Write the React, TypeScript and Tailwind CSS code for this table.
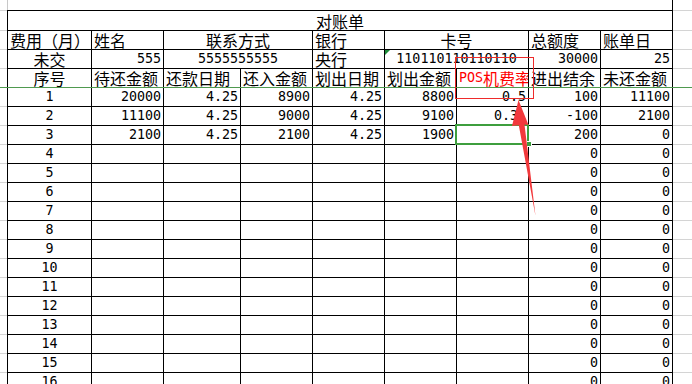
import React from 'react';
import clsx from 'clsx';

const cols = 'grid-cols-[84px_72px_77px_72px_72px_72px_72px_72px_72px]';

const rows: string[][] = [
  ['1', '20000', '4.25', '8900', '4.25', '8800', '0.5', '100', '11100'],
  ['2', '11100', '4.25', '9000', '4.25', '9100', '0.3', '-100', '2100'],
  ['3', '2100', '4.25', '2100', '4.25', '1900', '', '200', '0'],
  ...Array.from({ length: 13 }, (_, i) => [String(i + 4), '', '', '', '', '', '', '0', '0']),
];

// ascii runs get the narrow mono face, CJK keeps the sans face
const Txt: React.FC<{ s: string }> = ({ s }) => (
  <>
    {(s.match(/[\x00-\x7f]+|[^\x00-\x7f]+/g) || []).map((part, i) =>
      /^[\x00-\x7f]+$/.test(part) ? (
        <span key={i} className="font-['DejaVu_Sans_Mono',monospace] text-[13.33px]">
          {part}
        </span>
      ) : (
        <span key={i}>{part}</span>
      )
    )}
  </>
);

type CellProps = {
  s?: string;
  align?: 'left' | 'center' | 'right';
  span?: boolean;
  red?: boolean;
  className?: string;
  children?: React.ReactNode;
};

const Cell: React.FC<CellProps> = ({ s = '', align = 'left', span, red, className, children }) => (
  <div
    className={clsx(
      'relative h-[19px] border-t border-l border-black flex items-center whitespace-nowrap px-[2px] leading-[18px]',
      align === 'center' && 'justify-center',
      align === 'right' && 'justify-end',
      span && 'col-span-2',
      red && 'text-[#ff0000] overflow-hidden',
      className
    )}
  >
    {children}
    <Txt s={s} />
  </div>
);

const Gutter: React.FC<{ className?: string }> = ({ className }) => (
  <div className={clsx('flex flex-col', className)}>
    <div className="h-[10px] shrink-0" />
    <div className="h-[20px] shrink-0 border-t border-[#d4d4d4]" />
    {Array.from({ length: 19 }, (_, i) => (
      <div key={i} className="h-[19px] shrink-0 border-t border-[#d4d4d4]" />
    ))}
  </div>
);

const App: React.FC = () => {
  return (
    <div className="relative w-[692px] h-[384px] overflow-hidden bg-white flex text-black text-[16px] font-['Noto_Sans_CJK_SC',sans-serif]">
      <Gutter className="w-[7px]" />

      <div className="w-[666px] shrink-0 flex flex-col">
        <div className="h-[10px] shrink-0 border-l border-r border-l-[#c8c8c8] border-r-black" />
        <div className={clsx('grid border-r border-black', cols)}>
          <div className="col-span-9 h-[20px] border-t border-l border-black flex items-center justify-center leading-[18px]">
            对账单
          </div>

          <Cell s="费用（月）" />
          <Cell s="姓名" />
          <Cell s="联系方式" span align="center" />
          <Cell s="银行" />
          <Cell s="卡号" span align="center" />
          <Cell s="总额度" />
          <Cell s="账单日" />

          <Cell s="未交" align="center" />
          <Cell s="555" align="right" />
          <Cell s="5555555555" span align="center" />
          <Cell s="央行" />
          <Cell s="110110110110110" span align="center">
            <div className="absolute left-0 top-0 w-0 h-0 border-t-[5px] border-r-[5px] border-t-[#1e8c3a] border-r-transparent" />
          </Cell>
          <Cell s="30000" align="right" />
          <Cell s="25" align="right" />

          <Cell s="序号" align="center" />
          <Cell s="待还金额" />
          <Cell s="还款日期" />
          <Cell s="还入金额" />
          <Cell s="划出日期" />
          <Cell s="划出金额" />
          <Cell s="POS机费率" red />
          <Cell s="进出结余" />
          <Cell s="未还金额" />

          {rows.map((r, ri) =>
            r.map((v, ci) => (
              <Cell
                key={`${ri}-${ci}`}
                s={v}
                align={ci === 0 ? 'center' : 'right'}
                className={ri === 1 && ci === 6 ? 'pr-[10px]' : undefined}
              />
            ))
          )}
        </div>
      </div>

      <Gutter className="flex-1" />

      {/* frozen pane line */}
      <div className="absolute left-0 right-0 top-[87px] h-px bg-[#4f9a4f]" />

      {/* selected cell */}
      <div className="absolute left-[455px] top-[124px] w-[74px] h-[21px] border-2 border-[#3e9e3e]" />
      <div className="absolute left-[526px] top-[141px] w-[6px] h-[6px] bg-[#3e9e3e] border border-white" />

      {/* annotation */}
      <svg className="absolute inset-0 pointer-events-none" width="692" height="384" viewBox="0 0 692 384">
        <rect x="455.5" y="57.5" width="78" height="41" fill="none" stroke="#ee2b2b" strokeWidth="1" />
        <polygon
          points="518.5,100 528.5,125 524.5,124.5 535.5,216 518.8,125.3 512,126"
          fill="#f2393c"
        />
      </svg>
    </div>
  );
};

export default App;
